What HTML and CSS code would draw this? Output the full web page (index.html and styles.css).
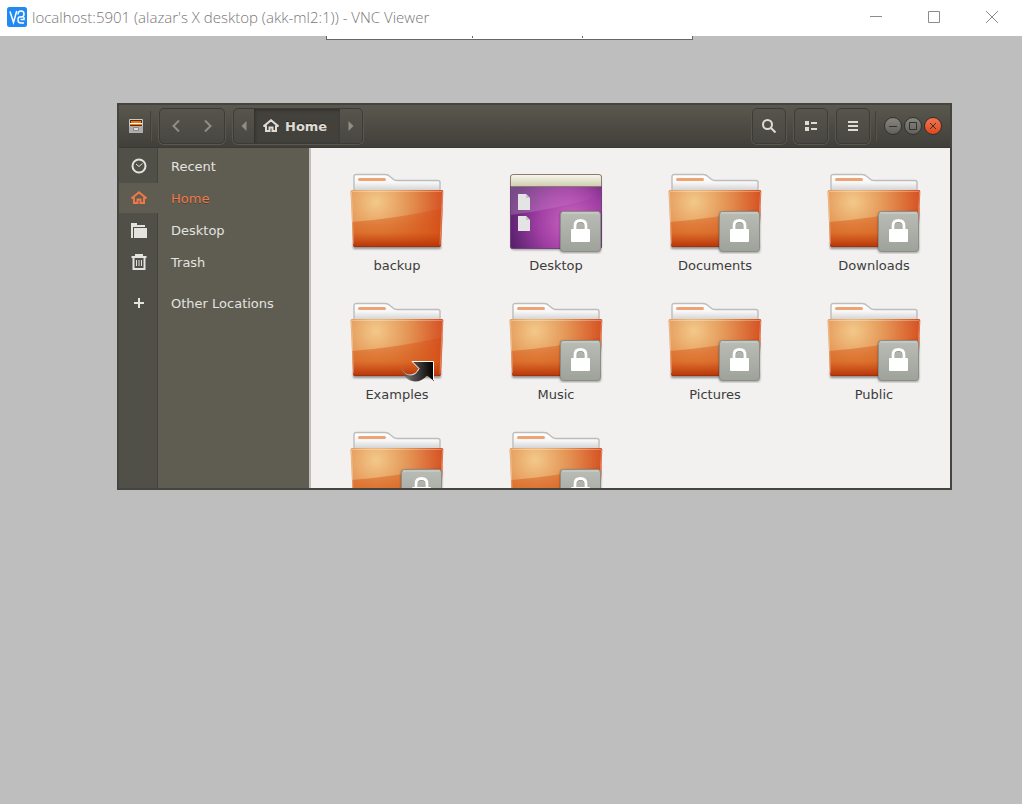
FILE: index.html
```
<!DOCTYPE html>
<html lang="en">
  <head>
    <meta charset="UTF-8" />
    <title>localhost:5901 - VNC Viewer</title>
    <link rel="stylesheet" href="styles.css">
  </head>
  <body>
    <!-- shared drawings -->
    <svg class="defs" width="0" height="0" aria-hidden="true">
      <defs>
        <radialGradient id="orange" gradientUnits="userSpaceOnUse" cx="27" cy="30" r="72">
          <stop offset="0" stop-color="#f2c98a" />
          <stop offset="0.45" stop-color="#e49555" />
          <stop offset="1" stop-color="#d4481c" />
        </radialGradient>
        <linearGradient id="orangeLow" gradientUnits="userSpaceOnUse" x1="0" y1="38" x2="0" y2="75">
          <stop offset="0" stop-color="#d4480c" stop-opacity="0.3" />
          <stop offset="0.6" stop-color="#d65a16" stop-opacity="0.6" />
          <stop offset="1" stop-color="#b83308" />
        </linearGradient>
        <linearGradient id="paper" x1="0" y1="0" x2="0" y2="1">
          <stop offset="0" stop-color="#fff" />
          <stop offset="0.3" stop-color="#f6f6f6" />
          <stop offset="0.7" stop-color="#c4c4c4" />
        </linearGradient>
        <radialGradient id="purple" gradientUnits="userSpaceOnUse" cx="63" cy="50" r="64">
          <stop offset="0" stop-color="#cb66c0" />
          <stop offset="0.5" stop-color="#a23fa5" />
          <stop offset="1" stop-color="#56206c" />
        </radialGradient>
        <linearGradient id="shine" x1="0" y1="0" x2="1" y2="0">
          <stop offset="0" stop-color="#fff" stop-opacity="0.2" />
          <stop offset="1" stop-color="#fff" stop-opacity="0" />
        </linearGradient>
        <linearGradient id="cream" x1="0" y1="0" x2="0" y2="1">
          <stop offset="0" stop-color="#f8f8ee" />
          <stop offset="1" stop-color="#cfcdaf" />
        </linearGradient>
        <linearGradient id="grey" x1="0" y1="0" x2="0" y2="1">
          <stop offset="0" stop-color="#babdb5" />
          <stop offset="1" stop-color="#9fa29a" />
        </linearGradient>
        <linearGradient id="arrow" x1="0" y1="0" x2="1" y2="0">
          <stop offset="0" stop-color="#666" stop-opacity="0.3" />
          <stop offset="0.35" stop-color="#555" />
          <stop offset="0.8" stop-color="#1c1616" />
          <stop offset="1" stop-color="#000" />
        </linearGradient>
        <linearGradient id="arrowEdge" x1="0" y1="0" x2="1" y2="0">
          <stop offset="0" stop-color="#fff" stop-opacity="0" />
          <stop offset="0.4" stop-color="#fff" />
        </linearGradient>
        <filter id="soft" x="-10%" y="-10%" width="120%" height="130%">
          <feGaussianBlur stdDeviation="1" />
        </filter>
      </defs>
      <symbol id="folder" viewBox="0 0 96 82">
        <path d="M4 70h88v6q0 1-1 1H5q-1 0-1-1z" fill="#000" opacity="0.4" filter="url(#soft)" />
        <path d="M5 30V5q0-2.500 2.500-2.500H36q3 0 5 2l3 2.500q1.500 1.500 4 1.500h41q2 0 2 2V30z" fill="url(#paper)" stroke="#bdbdbd" stroke-width="1.400" />
        <rect x="9" y="6" width="28" height="3" rx="1.500" fill="#eea374" />
        <path d="M3 18h90q1.500 0 1.300 2L92 73q-.2 2-2 2H6q-2 0-2-2L1.500 20q0-2 1.500-2z" fill="url(#orange)" />
        <path d="M3 50Q52 46 94 36L92 73q-.2 2-2 2H6q-2 0-2-2z" fill="url(#orangeLow)" />
        <path d="M4.500 72L2.500 20.500q0-1 1-1h89q1 0 1 1L91 73" fill="none" stroke="#fff" stroke-opacity="0.3" />
        <path d="M5 74.500h86" stroke="#9f3308" />
      </symbol>
      <symbol id="lock" viewBox="0 0 96 82">
        <rect x="52" y="40" width="41" height="41" rx="3" fill="#000" opacity="0.35" filter="url(#soft)" />
        <rect x="52.500" y="39.500" width="40" height="40" rx="3" fill="url(#grey)" stroke="#8b8e86" />
        <path d="M54 41h37" stroke="#d0d3cb" />
        <path d="M67 58v-3q0-6 5.500-6t5.500 6v3" fill="none" stroke="#7c7f78" stroke-width="3" />
        <path d="M67 58v-4q0-5.500 5.500-5.500t5.500 5.500v4" fill="none" stroke="#fff" stroke-width="3" />
        <rect x="63" y="57" width="19" height="13" rx="1" fill="#fff" />
      </symbol>
      <symbol id="desktop" viewBox="0 0 96 82">
        <rect x="3" y="8" width="90" height="70" rx="3" fill="#000" opacity="0.35" filter="url(#soft)" />
        <rect x="2" y="3" width="92" height="74" rx="3" fill="url(#purple)" />
        <path d="M2 14h91v10Q50 37 2 43z" fill="url(#shine)" />
        <path d="M2.500 14.500V5q0-2.500 2.500-2.500h86q2.500 0 2.500 2.500v9.500z" fill="url(#cream)" stroke="#8d7a72" />
        <path d="M2.500 14v60q0 2.500 2.500 2.500h86q2.500 0 2.500-2.500V14" fill="none" stroke="#74417d" />
        <g fill="#e4e4e4">
          <path d="M10 22h8l4 4v12H10z" />
          <path d="M10 44h8l4 4v11H10z" />
          <path d="M18 22v4h4zM18 44v4h4z" fill="#c4c4c4" />
        </g>
      </symbol>
      <symbol id="link" viewBox="0 0 96 82">
        <path d="M63.500 60.500H85V80l-7-5.500q-5 6-12 6-12-1-14.500-16 3 9 9.500 9 6 0 9-6z" fill="url(#arrow)" />
        <path d="M51.500 65q3 9 9.500 9 6 0 9-6.500l-7-7H84.500V79" fill="none" stroke="url(#arrowEdge)" />
      </symbol>
      <symbol id="house" viewBox="0 0 16 14">
        <path d="M.5 7.500L8 1.200l7.500 6.300M3 6.500V12h3.500V8.500h3V12H13V6.500" fill="none" stroke="currentColor" stroke-width="2" />
      </symbol>
    </svg>

    <header class="titlebar">
      <svg class="logo" viewBox="0 0 20 20" aria-hidden="true">
        <rect width="20" height="20" rx="2.500" fill="#2189f3" />
        <path d="M3 4.500l3.500 11 3.200-11.500M11 7.500q0-3.500 3-3.500t3 3-3 3h-1.500q-1.500 0-1.500 3t3 3h3M13.500 12.500H17V10" fill="none" stroke="#fff" stroke-width="1.500" />
      </svg>
      <h1>localhost:5901 (alazar's X desktop (akk-ml2:1)) - VNC Viewer</h1>
      <div class="caption-buttons">
        <button aria-label="Minimize"><svg viewBox="0 0 12 12"><path d="M0 5.500h12" /></svg></button>
        <button aria-label="Maximize"><svg viewBox="0 0 12 12"><path d="M.5.500h11v11H.5z" /></svg></button>
        <button aria-label="Close"><svg viewBox="0 0 12 12"><path d="M0 0l12 12M12 0L0 12" /></svg></button>
      </div>
    </header>

    <main class="desktop">
      <!-- collapsed viewer toolbar -->
      <div class="viewer-bar"><span></span><span></span><span></span></div>

      <section class="files">
        <header class="toolbar">
          <svg class="app-icon" viewBox="0 0 14 14" aria-hidden="true">
            <rect width="14" height="14" rx="1" fill="#c8c8c8" />
            <rect x="1" y="1" width="12" height="6" fill="#54291a" />
            <path d="M2 3h10" stroke="#f57900" stroke-width="2" />
            <path d="M1 4.500h12" stroke="#fff" />
            <path d="M1 5.500h12" stroke="#f57900" />
            <rect y="7" width="14" height="7" rx="1" fill="#aeaeae" />
            <path d="M4.500 8.500h5v3h-5z" fill="#ddd" stroke="#888" />
          </svg>
          <div class="divider"></div>
          <div class="group nav">
            <button aria-label="Back"><svg viewBox="0 0 8 12"><path d="M7 .5L1.500 6 7 11.500" /></svg></button>
            <button aria-label="Forward"><svg viewBox="0 0 8 12"><path d="M1 .5L6.500 6 1 11.500" /></svg></button>
          </div>
          <div class="group path">
            <button class="step" aria-label="Scroll path left"><svg viewBox="0 0 6 10"><path d="M5.500 0v10L.5 5z" /></svg></button>
            <button class="crumb"><svg><use href="#house" /></svg>Home</button>
            <button class="step" aria-label="Scroll path right"><svg viewBox="0 0 6 10"><path d="M.5 0v10l5-5z" /></svg></button>
          </div>
          <div class="tools">
            <button class="tool" aria-label="Search"><svg viewBox="0 0 16 16"><circle cx="6.500" cy="6.500" r="4.500" /><path d="M10 10l4.500 4.500" /></svg></button>
            <button class="tool" aria-label="View as list"><svg viewBox="0 0 16 16"><path d="M4 3v4M4 9v4" stroke-width="4" /><path d="M8 5h6M8 11h6" /></svg></button>
            <button class="tool" aria-label="Menu"><svg viewBox="0 0 16 16"><path d="M3 4h10M3 8h10M3 12h10" /></svg></button>
          </div>
          <div class="divider"></div>
          <div class="dots">
            <button class="dot" aria-label="Minimize"><svg viewBox="0 0 10 10"><path d="M1 5.500h8" /></svg></button>
            <button class="dot" aria-label="Maximize"><svg viewBox="0 0 10 10"><path d="M1.500 1.500h7v7h-7z" /></svg></button>
            <button class="dot close" aria-label="Close"><svg viewBox="0 0 10 10"><path d="M2 2l6 6M8 2L2 8" /></svg></button>
          </div>
        </header>

        <div class="body">
          <nav class="places">
            <a href="#"><span class="ico"><svg viewBox="0 0 16 16"><circle cx="8" cy="8" r="6.500" fill="none" stroke="currentColor" stroke-width="2" /><path d="M5 6l3 2.500 3.500-3" fill="none" stroke="currentColor" /></svg></span>Recent</a>
            <a href="#" class="active"><span class="ico"><svg><use href="#house" /></svg></span>Home</a>
            <a href="#"><span class="ico"><svg viewBox="0 0 16 16"><path d="M0 1h6v2h8v2H2v11H0zM3 6h13v10H3z" fill="currentColor" /></svg></span>Desktop</a>
            <a href="#"><span class="ico"><svg viewBox="0 0 16 16"><path d="M.5 3h15M4 1h8M2.500 4v11h11V4" fill="none" stroke="currentColor" stroke-width="2" /><path d="M5.500 6v6M8 6v6M10.500 6v6" stroke="currentColor" /></svg></span>Trash</a>
            <a href="#" class="other"><span class="ico"><svg viewBox="0 0 16 16"><path d="M3 8h10M8 3v10" fill="none" stroke="currentColor" stroke-width="2" /></svg></span>Other Locations</a>
          </nav>
          <div class="grid">
            <figure><svg><use href="#folder" /></svg><figcaption>backup</figcaption></figure>
            <figure><svg><use href="#desktop" /><use href="#lock" /></svg><figcaption>Desktop</figcaption></figure>
            <figure><svg><use href="#folder" /><use href="#lock" /></svg><figcaption>Documents</figcaption></figure>
            <figure><svg><use href="#folder" /><use href="#lock" /></svg><figcaption>Downloads</figcaption></figure>
            <figure><svg><use href="#folder" /><use href="#link" /></svg><figcaption>Examples</figcaption></figure>
            <figure><svg><use href="#folder" /><use href="#lock" /></svg><figcaption>Music</figcaption></figure>
            <figure><svg><use href="#folder" /><use href="#lock" /></svg><figcaption>Pictures</figcaption></figure>
            <figure><svg><use href="#folder" /><use href="#lock" /></svg><figcaption>Public</figcaption></figure>
            <figure><svg><use href="#folder" /><use href="#lock" /></svg></figure>
            <figure><svg><use href="#folder" /><use href="#lock" /></svg></figure>
          </div>
        </div>
      </section>
    </main>
  </body>
</html>
```
FILE: styles.css
```
* {
  box-sizing: border-box;
}
body {
  margin: 0;
  min-height: 100vh;
  display: flex;
  flex-direction: column;
  background: #bebebe;
  font-family: "DejaVu Sans", sans-serif;
  font-size: 13px;
}
button {
  display: flex;
  align-items: center;
  justify-content: center;
  margin: 0;
  padding: 0;
  border: none;
  background: none;
  font: inherit;
  color: inherit;
}
.defs {
  position: absolute;
}

/* viewer title bar */
.titlebar {
  display: flex;
  align-items: center;
  height: 36px;
  padding: 0 1px 2px 7px;
  background: #fff;
}
.logo {
  width: 20px;
  height: 20px;
  margin-right: 5px;
}
h1 {
  flex: 1;
  margin: 0;
  font: 300 15px/20px "Open Sans", sans-serif;
  color: #777;
}
.caption-buttons {
  display: flex;
}
.caption-buttons button {
  width: 58px;
  height: 34px;
}
.caption-buttons svg {
  width: 12px;
  height: 12px;
  fill: none;
  stroke: #8c8c8c;
}

.desktop {
  flex: 1;
  padding-right: 3px;
}
.viewer-bar {
  display: flex;
  width: 367px;
  height: 4px;
  margin: 0 auto;
  background: #fff;
  border: 1px solid #666;
  border-top: none;
}
.viewer-bar span {
  flex: 1;
  height: 2px;
}
.viewer-bar span:first-child {
  flex: 0 0 145px;
}
.viewer-bar span + span {
  border-left: 1px solid #666;
}

/* file manager window */
.files {
  margin: 63px 67px 0 117px;
  border: 2px solid #45453f;
}
.toolbar {
  display: flex;
  align-items: center;
  height: 43px;
  padding: 0 8px 0 10px;
  background: linear-gradient(#5a584e, #403f3a);
  border-bottom: 1px solid #3a3935;
  color: #dfdbd2;
}
.app-icon {
  width: 14px;
  height: 14px;
  margin-right: 2px;
}
.divider {
  width: 2px;
  height: 30px;
  margin: 0 7px 0 5px;
  background: #55534a;
  border-left: 1px solid #403f3a;
}
.group,
.tool {
  height: 36px;
  border: 1px solid #3c3b37;
  border-radius: 5px;
  background: linear-gradient(#56544d, #484741);
  box-shadow: 0 0 0 1px #58564e;
}
.group {
  display: flex;
  margin-right: 8px;
}
.nav {
  width: 66px;
}
.nav button {
  flex: 1;
}
.nav svg {
  width: 8px;
  height: 12px;
  fill: none;
  stroke: #918e86;
  stroke-width: 2;
}
.step {
  width: 22px;
}
.step svg {
  width: 6px;
  height: 10px;
  fill: #918e86;
}
.step:first-child {
  width: 20px;
}
.crumb {
  gap: 6px;
  width: 86px;
  justify-content: flex-start;
  padding-left: 9px;
  background: #42413c;
  box-shadow: inset 1px 1px 3px #2e2d2a;
  font-weight: bold;
  text-shadow: 0 -1px #2b2a27;
}
.crumb svg {
  width: 16px;
  height: 14px;
}
.tools {
  display: flex;
  gap: 8px;
  margin-left: auto;
}
.tool {
  width: 34px;
}
.tool svg {
  width: 16px;
  height: 16px;
  fill: none;
  stroke: currentColor;
  stroke-width: 2;
}
.dots {
  display: flex;
  gap: 2px;
}
.dot {
  width: 18px;
  height: 18px;
  border: 1px solid #32312d;
  border-radius: 50%;
  background: linear-gradient(#868680, #62615b);
}
.dot.close {
  background: linear-gradient(#f37450, #e0481c);
}
.dot svg {
  width: 10px;
  height: 10px;
  fill: none;
  stroke: #33322e;
}

.body {
  display: flex;
  height: 340px;
  overflow: hidden;
  background: #f2f1f0;
}
.places {
  display: flex;
  flex-direction: column;
  gap: 2px;
  flex: 0 0 192px;
  padding-top: 3px;
  background: linear-gradient(to right, #504f48 38px, #44433d 38px, #44433d 39px, #5f5d51 39px);
  border-right: 2px solid #c0bfbb;
}
.places a {
  display: flex;
  align-items: center;
  height: 30px;
  color: #e3e3e0;
  text-decoration: none;
}
.places .active {
  background: #5f5d51;
  color: #f07746;
  text-shadow: 0 1px #45443c;
}
.places .other {
  margin-top: 9px;
}
.ico {
  display: flex;
  justify-content: center;
  width: 40px;
  margin-right: 12px;
}
.ico svg {
  width: 16px;
  height: 16px;
}
.grid {
  flex: 1;
  display: grid;
  grid-template-columns: repeat(auto-fill, minmax(110px, 1fr));
  align-content: start;
  gap: 27px 49px;
  padding: 24px 21px 0 31px;
}
figure {
  display: flex;
  flex-direction: column;
  align-items: center;
  gap: 4px;
  margin: 0;
}
figure svg {
  width: 96px;
  height: 82px;
}
figcaption {
  line-height: 16px;
  color: #3c3c3c;
}
```
